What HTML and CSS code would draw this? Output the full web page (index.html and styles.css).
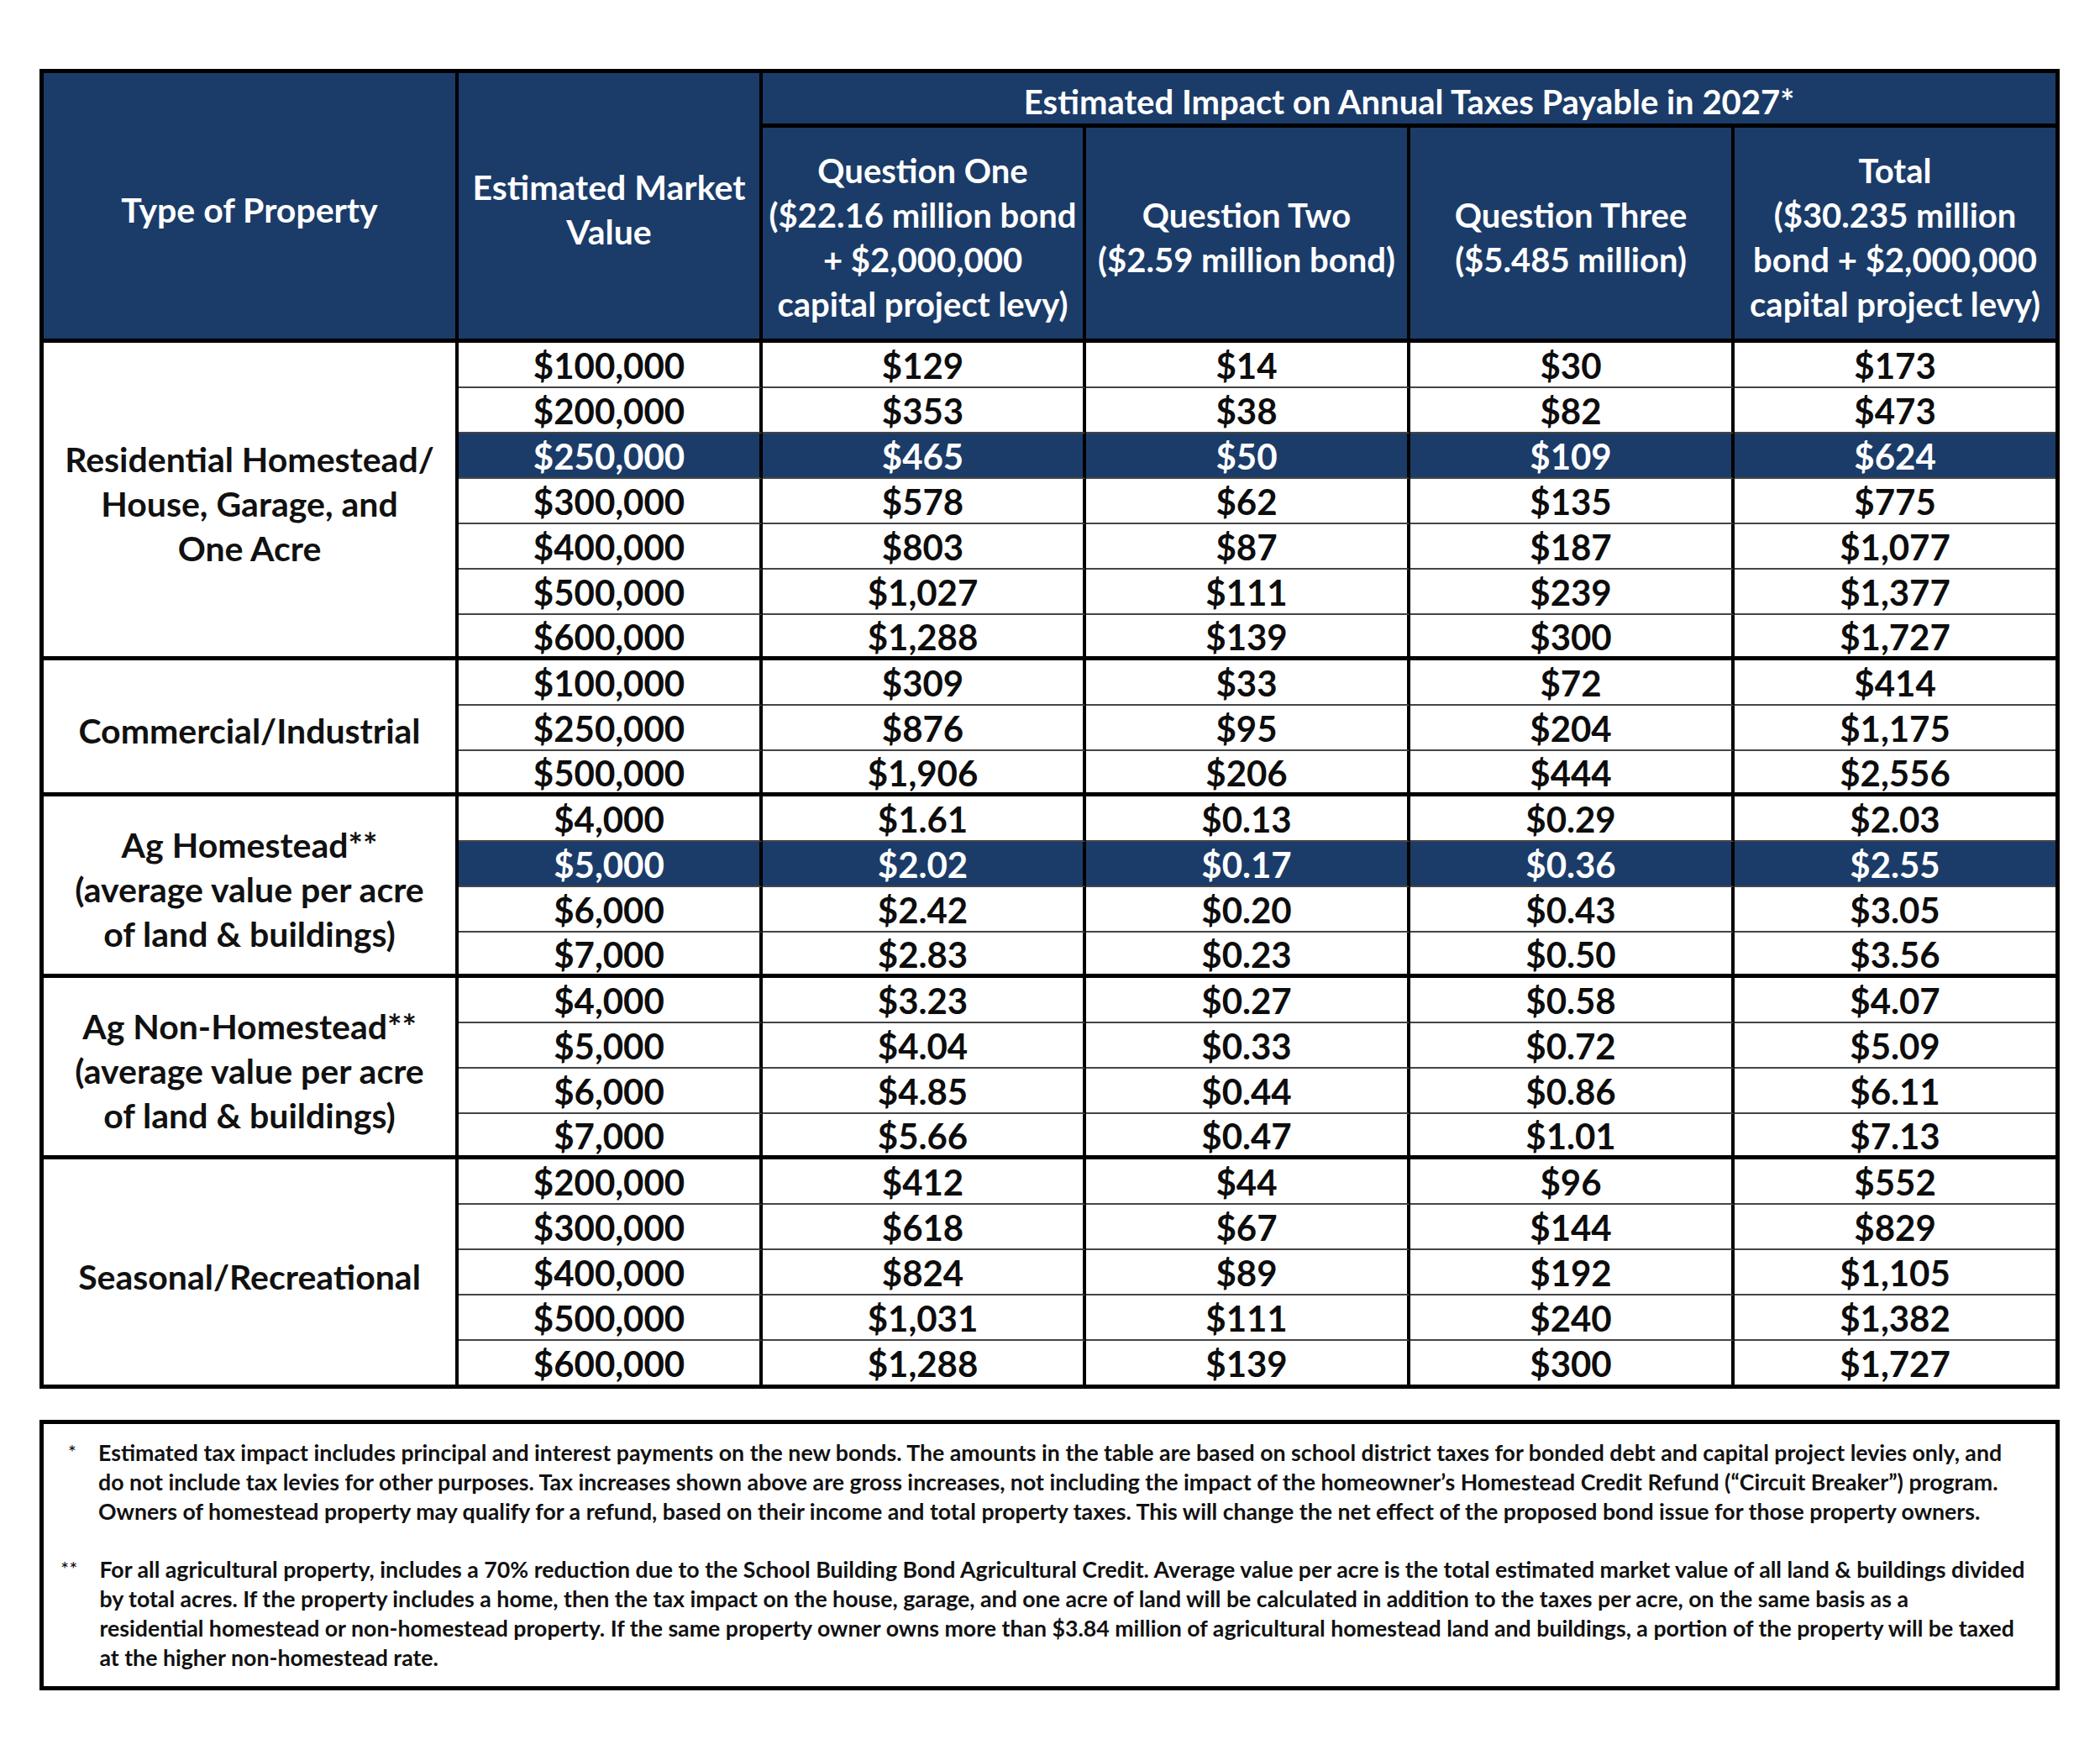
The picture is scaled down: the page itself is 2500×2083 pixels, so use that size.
FILE: index.html
```html
<!DOCTYPE html>
<html lang="en">
<head>
<meta charset="utf-8">
<title>Estimated Tax Impact</title>
<link rel="stylesheet" href="styles.css">
</head>
<body>
<table class="tax">
  <colgroup>
    <col class="c-type"><col class="c-val"><col class="c-q1"><col class="c-q2"><col class="c-q3"><col class="c-tot">
  </colgroup>
  <thead>
    <tr class="h1">
      <th rowspan="2" class="hd tall">Type of Property</th>
      <th rowspan="2" class="hd tall">Estimated Market<br>Value</th>
      <th colspan="4" class="hd top last">Estimated Impact on Annual Taxes Payable in 2027*</th>
    </tr>
    <tr class="h2">
      <th class="hd sub">Question One<br>($22.16 million bond<br>+ $2,000,000<br>capital project levy)</th>
      <th class="hd sub">Question Two<br>($2.59 million bond)</th>
      <th class="hd sub">Question Three<br>($5.485 million)</th>
      <th class="hd sub last">Total<br>($30.235 million<br>bond + $2,000,000<br>capital project levy)</th>
    </tr>
  </thead>
  <tbody>
    <tr><td rowspan="7" class="label grp">Residential Homestead/<br>House, Garage, and<br>One Acre</td><td>$100,000</td><td>$129</td><td>$14</td><td>$30</td><td class="last">$173</td></tr>
    <tr><td>$200,000</td><td>$353</td><td>$38</td><td>$82</td><td class="last">$473</td></tr>
    <tr class="hl"><td>$250,000</td><td>$465</td><td>$50</td><td>$109</td><td class="last">$624</td></tr>
    <tr><td>$300,000</td><td>$578</td><td>$62</td><td>$135</td><td class="last">$775</td></tr>
    <tr><td>$400,000</td><td>$803</td><td>$87</td><td>$187</td><td class="last">$1,077</td></tr>
    <tr><td>$500,000</td><td>$1,027</td><td>$111</td><td>$239</td><td class="last">$1,377</td></tr>
    <tr class="end"><td>$600,000</td><td>$1,288</td><td>$139</td><td>$300</td><td class="last">$1,727</td></tr>

    <tr><td rowspan="3" class="label grp">Commercial/Industrial</td><td>$100,000</td><td>$309</td><td>$33</td><td>$72</td><td class="last">$414</td></tr>
    <tr><td>$250,000</td><td>$876</td><td>$95</td><td>$204</td><td class="last">$1,175</td></tr>
    <tr class="end"><td>$500,000</td><td>$1,906</td><td>$206</td><td>$444</td><td class="last">$2,556</td></tr>

    <tr><td rowspan="4" class="label grp">Ag Homestead**<br>(average value per acre<br>of land &amp; buildings)</td><td>$4,000</td><td>$1.61</td><td>$0.13</td><td>$0.29</td><td class="last">$2.03</td></tr>
    <tr class="hl"><td>$5,000</td><td>$2.02</td><td>$0.17</td><td>$0.36</td><td class="last">$2.55</td></tr>
    <tr><td>$6,000</td><td>$2.42</td><td>$0.20</td><td>$0.43</td><td class="last">$3.05</td></tr>
    <tr class="end"><td>$7,000</td><td>$2.83</td><td>$0.23</td><td>$0.50</td><td class="last">$3.56</td></tr>

    <tr><td rowspan="4" class="label grp">Ag Non-Homestead**<br>(average value per acre<br>of land &amp; buildings)</td><td>$4,000</td><td>$3.23</td><td>$0.27</td><td>$0.58</td><td class="last">$4.07</td></tr>
    <tr><td>$5,000</td><td>$4.04</td><td>$0.33</td><td>$0.72</td><td class="last">$5.09</td></tr>
    <tr><td>$6,000</td><td>$4.85</td><td>$0.44</td><td>$0.86</td><td class="last">$6.11</td></tr>
    <tr class="end"><td>$7,000</td><td>$5.66</td><td>$0.47</td><td>$1.01</td><td class="last">$7.13</td></tr>

    <tr><td rowspan="5" class="label final">Seasonal/Recreational</td><td>$200,000</td><td>$412</td><td>$44</td><td>$96</td><td class="last">$552</td></tr>
    <tr><td>$300,000</td><td>$618</td><td>$67</td><td>$144</td><td class="last">$829</td></tr>
    <tr><td>$400,000</td><td>$824</td><td>$89</td><td>$192</td><td class="last">$1,105</td></tr>
    <tr><td>$500,000</td><td>$1,031</td><td>$111</td><td>$240</td><td class="last">$1,382</td></tr>
    <tr class="bottom"><td>$600,000</td><td>$1,288</td><td>$139</td><td>$300</td><td class="last">$1,727</td></tr>
  </tbody>
</table>

<div class="notes">
  <div class="note">
    <span class="mark">*</span>
    <p class="note-text">Estimated tax impact includes principal and interest payments on the new bonds. The amounts in the table are based on school district taxes for bonded debt and capital project levies only, and<br>do not include tax levies for other purposes. Tax increases shown above are gross increases, not including the impact of the homeowner’s Homestead Credit Refund (“Circuit Breaker”) program.<br>Owners of homestead property may qualify for a refund, based on their income and total property taxes. This will change the net effect of the proposed bond issue for those property owners.</p>
  </div>
  <div class="note">
    <span class="mark">**</span>
    <p class="note-text">For all agricultural property, includes a 70% reduction due to the School Building Bond Agricultural Credit. Average value per acre is the total estimated market value of all land &amp; buildings divided<br>by total acres. If the property includes a home, then the tax impact on the house, garage, and one acre of land will be calculated in addition to the taxes per acre, on the same basis as a<br>residential homestead or non-homestead property. If the same property owner owns more than $3.84 million of agricultural homestead land and buildings, a portion of the property will be taxed<br>at the higher non-homestead rate.</p>
  </div>
</div>
</body>
</html>
```

FILE: styles.css
```css
html, body {
  margin: 0;
  padding: 0;
  background: #fff;
}

body {
  font-family: "Lato", "Open Sans", sans-serif;
  color: #111;
  padding: 82px 0 0 47px;
  width: 2405px;
}

.tax {
  table-layout: fixed;
  border-collapse: separate;
  border-spacing: 0;
  width: 2405px;
  border: 5px solid #000;
}

.c-type { width: 494px; }
.c-val { width: 362px; }
.c-q1 { width: 385px; }
.c-q2 { width: 386px; }
.c-q3 { width: 386px; }
.c-tot { width: 382px; }

th, td {
  padding: 0;
  text-align: center;
  border-right: 4px solid #000;
}

th.last, td.last {
  border-right: none;
}

.hd {
  background: #1b3c69;
  color: #fff;
  font-weight: 700;
  font-size: 40px;
  line-height: 53px;
  border-bottom: 5px solid #000;
  vertical-align: middle;
  box-sizing: border-box;
}

.h1 .top {
  height: 65px;
  line-height: 52px;
  padding-top: 8px;
}

.h2 .sub {
  height: 256px;
  padding-top: 10px;
  padding-bottom: 0;
}

.tall {
  font-size: 41px;
  padding-top: 8px;
}

td {
  font-weight: 700;
  font-size: 42px;
  line-height: 49px;
  padding-top: 3px;
  color: #0d0d0d;
  border-bottom: 2px solid #454545;
  vertical-align: top;
}

tr.end td {
  line-height: 46px;
  border-bottom: 5px solid #000;
}

tr.bottom td {
  border-bottom: none;
}

tr.hl td {
  background: #1b3c69;
  color: #fff;
}

td.label {
  font-size: 41px;
  line-height: 53px;
  padding-top: 10px;
  color: #111;
  background: #fff;
  vertical-align: middle;
}

td.label.grp {
  border-bottom: 5px solid #000;
}

td.label.final {
  border-bottom: none;
}

.notes {
  margin-top: 37px;
  border: 5px solid #000;
  padding: 17px 20px 16px 20px;
  display: flex;
  flex-direction: column;
  gap: 34px;
}

.note {
  display: flex;
  align-items: flex-start;
}

.mark {
  flex: 0 0 45px;
  box-sizing: border-box;
  padding-right: 26px;
  text-align: right;
  font-size: 24px;
  line-height: 32px;
  font-weight: 400;
}

.note-text {
  margin: 0;
  font-size: 26.7px;
  line-height: 35px;
  font-weight: 700;
  color: #111;
  white-space: nowrap;
}
```
